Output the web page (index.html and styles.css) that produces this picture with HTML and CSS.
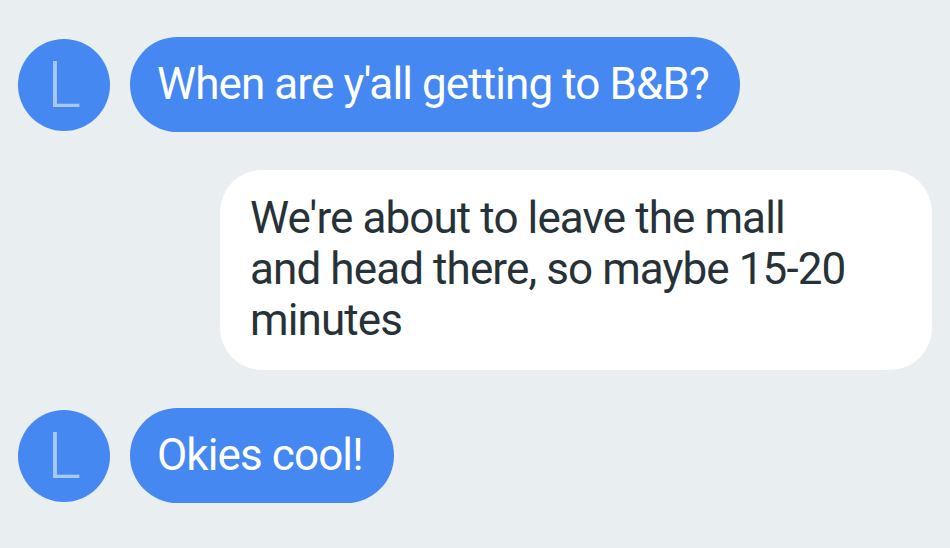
FILE: index.html
```html
<!DOCTYPE html>
<html>
<head>
<meta charset="utf-8">
<link rel="stylesheet" href="styles.css">
</head>
<body>
<div class="chat">
  <div class="row in">
    <div class="avatar">L</div>
    <div class="bubble blue">When are y'all getting to B&amp;B?</div>
  </div>
  <div class="row out">
    <div class="bubble white">We're about to leave the mall<br>and head there, so maybe 15-20<br>minutes</div>
  </div>
  <div class="row in">
    <div class="avatar">L</div>
    <div class="bubble blue">Okies cool!</div>
  </div>
</div>
</body>
</html>
```
FILE: styles.css
```css
html, body {
  margin: 0;
  padding: 0;
  background: #e9eef1;
  width: 950px;
  height: 548px;
  overflow: hidden;
}
.chat {
  display: flex;
  flex-direction: column;
  gap: 38px;
  padding: 37px 18px 0 18px;
  font-family: Roboto, "Noto Sans", sans-serif;
}
.row {
  display: flex;
  align-items: center;
  gap: 20px;
}
.row.out {
  justify-content: flex-end;
}
.avatar {
  width: 92px;
  height: 92px;
  border-radius: 50%;
  background: #4688f1;
  color: #a8c8f8;
  font-size: 64px;
  font-weight: 300;
  line-height: 1;
  padding-top: 2px;
  box-sizing: border-box;
  display: flex;
  align-items: center;
  justify-content: center;
  flex: none;
}
.bubble {
  font-size: 44px;
  letter-spacing: -0.9px;
  line-height: 51px;
}
.bubble.blue {
  background: #4688f1;
  color: #ffffff;
  height: 95px;
  box-sizing: border-box;
  padding: 0 31px 0 27px;
  border-radius: 48px;
  display: flex;
  align-items: center;
}
.bubble.white {
  background: #ffffff;
  color: #263238;
  box-sizing: border-box;
  width: 712px;
  padding: 23px 30px 24px 30px;
  border-radius: 42px;
}
```
